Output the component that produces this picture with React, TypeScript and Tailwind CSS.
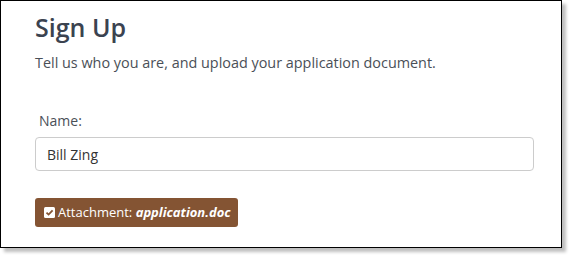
export default function App() {
  return (
    <div className="h-[258px] w-[571px] bg-white font-['Open_Sans',sans-serif]">
      <div className="h-[248px] w-[562px] border border-black bg-white px-[34px] pt-[9px] shadow-[4px_4px_3px_rgba(0,0,0,0.25)]">
        <h1 className="text-[25px] font-semibold leading-[34px] text-[#3b4350]">Sign Up</h1>
        <p className="mt-[9px] text-[14.4px] leading-[20px] text-[#4a4f57]">
          Tell us who you are, and upload your application document.
        </p>
        <label className="mt-[38px] block pl-[4px] text-[14px] leading-[20px] text-[#4a4f57]">Name:</label>
        <input
          readOnly
          value="Bill Zing"
          className="mt-[6px] block h-[34px] w-[499px] rounded-[4px] border border-[#cccccc] px-[11px] text-[14px] text-[#333333] outline-none"
        />
        <button className="mt-[27px] flex h-[29px] items-center gap-[3px] rounded-[3px] bg-[#845433] pl-[9px] pr-[7px] text-[13px] text-white">
          <svg width="11" height="11" viewBox="0 0 11 11">
            <rect x="0" y="0" width="11" height="11" rx="1.5" fill="white" />
            <path d="M2.5 5.6 L4.6 7.6 L8.6 3.4" stroke="#845433" strokeWidth="1.8" fill="none" />
          </svg>
          <span>
            Attachment: <b className="italic">application.doc</b>
          </span>
        </button>
      </div>
    </div>
  );
}
